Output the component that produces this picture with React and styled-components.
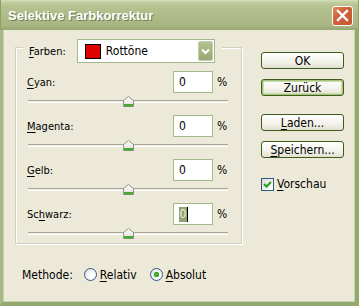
import React from "react";
import styled, { createGlobalStyle } from "styled-components";

const GlobalStyle = createGlobalStyle`
	html, body {
		margin: 0;
		padding: 0;
		background: #ece9d8;
	}
	body {
		font-family: "DejaVu Sans Condensed", "Liberation Sans", sans-serif;
		font-size: 11px;
		color: #000;
	}
	u {
		text-decoration-thickness: 1px;
		text-underline-offset: 2px;
	}
`;

const colorRows = [
	{ key: "c", pre: "", mn: "C", post: "yan:" },
	{ key: "m", pre: "", mn: "M", post: "agenta:" },
	{ key: "g", pre: "", mn: "G", post: "elb:" },
	{ key: "k", pre: "Sc", mn: "h", post: "warz:", selected: true },
];

const Dialog = () => {
	return (
		<Window>
			<GlobalStyle />
			<TitleBar>
				<Title>Selektive Farbkorrektur</Title>
				<CloseButton>
					<svg width="13" height="13" viewBox="0 0 13 13">
						<path d="M2 2 L11 11 M11 2 L2 11" stroke="#fff" strokeWidth="2.4" strokeLinecap="square" />
					</svg>
				</CloseButton>
			</TitleBar>

			<Body>
				<LeftColumn>
					<Group>
						<GroupHeader>
							<span>
								<u>F</u>arben:
							</span>
							<Select>
								<Swatch />
								<SelectText>Rottöne</SelectText>
								<SelectArrow>
									<svg width="9" height="7" viewBox="0 0 9 7">
										<path d="M1 1.5 L4.5 5 L8 1.5" fill="none" stroke="#fff" strokeWidth="2" />
									</svg>
								</SelectArrow>
							</Select>
						</GroupHeader>

						<Rows>
							{colorRows.map((r) => (
								<ColorRow key={r.key}>
									<ValueLine>
										<Label>
											{r.pre}
											<u>{r.mn}</u>
											{r.post}
										</Label>
										<NumberBox>
											{r.selected ? (
												<>
													<Selection>0</Selection>
													<Caret />
												</>
											) : (
												"0"
											)}
										</NumberBox>
										<Percent>%</Percent>
									</ValueLine>
									<Slider>
										<Track />
										<Thumb>
											<svg width="11" height="11" viewBox="0 0 11 11">
												<defs>
													<linearGradient id={`th-${r.key}`} x1="0" y1="0" x2="0" y2="1">
														<stop offset="0" stopColor="#ffffff" />
														<stop offset="1" stopColor="#dedfd6" />
													</linearGradient>
												</defs>
												<path
													d="M0.5 4.5 L5.5 0.5 L10.5 4.5 V10.5 H0.5 Z"
													fill={`url(#th-${r.key})`}
													stroke="#8d9482"
												/>
												<rect x="1" y="8" width="9" height="2.5" fill="#49a63a" />
											</svg>
										</Thumb>
									</Slider>
								</ColorRow>
							))}
						</Rows>
					</Group>

					<MethodRow>
						<span>Methode:</span>
						<RadioItem>
							<Radio />
							<span>
								<u>R</u>elativ
							</span>
						</RadioItem>
						<RadioItem>
							<Radio $checked />
							<span>
								<u>A</u>bsolut
							</span>
						</RadioItem>
					</MethodRow>
				</LeftColumn>

				<RightColumn>
					<Button>OK</Button>
					<Button $default>Zurück</Button>
					<Button $gap>
						<u>L</u>aden...
					</Button>
					<Button>
						<u>S</u>peichern...
					</Button>
					<CheckRow>
						<CheckBox>
							<svg width="9" height="9" viewBox="0 0 9 9">
								<path d="M1 4 L3.5 6.5 L8 2" fill="none" stroke="#21a121" strokeWidth="2" />
							</svg>
						</CheckBox>
						<span>
							<u>V</u>orschau
						</span>
					</CheckRow>
				</RightColumn>
			</Body>
		</Window>
	);
};

const Window = styled.div`
	width: 359px;
	height: 306px;
	display: flex;
	flex-direction: column;
	overflow: hidden;
`;

const TitleBar = styled.div`
	height: 30px;
	flex: none;
	box-sizing: border-box;
	display: flex;
	align-items: center;
	justify-content: space-between;
	padding: 1px 5px 0 7px;
	background: linear-gradient(
		to bottom,
		#d6dfbb 0px,
		#c4cfa2 2px,
		#b6c290 6px,
		#afbb89 50%,
		#a9b583 85%,
		#98a672 100%
	);
	border-left: 1px solid #8ea066;
	border-right: 1px solid #8ea066;
`;

const Title = styled.div`
	font: bold 13px "Liberation Sans", Arial, sans-serif;
	color: #fff;
	text-shadow: 1px 1px 0 #6e7d4c;
`;

const CloseButton = styled.div`
	width: 21px;
	height: 20px;
	box-sizing: border-box;
	border: 1px solid #fff;
	border-radius: 3px;
	background: linear-gradient(135deg, #e08a66 0%, #cf6039 40%, #c4552f 100%);
	display: flex;
	align-items: center;
	justify-content: center;
`;

const Body = styled.div`
	flex: 1;
	display: flex;
	padding: 9px 11px 0 12px;
	background: #ece9d8;
	border-left: 3px solid #a6b884;
	border-right: 4px solid #93a86d;
	border-bottom: 4px solid #93a86d;
	box-shadow: inset 1px 0 0 #c7d3b0, inset -1px -1px 0 #c7d3b0;
`;

const LeftColumn = styled.div`
	width: 227px;
	display: flex;
	flex-direction: column;
`;

const Group = styled.div`
	margin-top: 8px;
	border: 1px solid #d0d0bf;
	box-shadow: 1px 1px 0 #fff, inset 1px 1px 0 #fff;
	padding: 0 13px 0 11px;
	display: flex;
	flex-direction: column;
`;

const GroupHeader = styled.div`
	align-self: flex-start;
	margin: -9px 0 0 -4px;
	padding: 0 7px 0 6px;
	background: #ece9d8;
	display: flex;
	align-items: center;
	gap: 11px;
`;

const Select = styled.div`
	width: 138px;
	height: 24px;
	box-sizing: border-box;
	border: 1px solid #a5b88c;
	background: #fff;
	display: flex;
	align-items: center;
	padding: 0 1px 0 7px;
`;

const Swatch = styled.div`
	width: 16px;
	height: 15px;
	box-sizing: border-box;
	border: 1px solid #000;
	background: #e00000;
`;

const SelectText = styled.span`
	margin-left: 5px;
	font-size: 12px;
`;

const SelectArrow = styled.div`
	margin-left: auto;
	width: 15px;
	height: 20px;
	box-sizing: border-box;
	border: 1px solid #c3cdb0;
	border-radius: 2px;
	background: linear-gradient(#b4c294, #98a870);
	display: flex;
	align-items: center;
	justify-content: center;
`;

const Rows = styled.div`
	margin-top: 8px;
	display: flex;
	flex-direction: column;
	gap: 4px;
`;

const ColorRow = styled.div`
	display: flex;
	flex-direction: column;
`;

const ValueLine = styled.div`
	height: 22px;
	display: flex;
	align-items: center;
`;

const Label = styled.span`
	flex: 1;
`;

const NumberBox = styled.div`
	width: 40px;
	height: 22px;
	box-sizing: border-box;
	border: 1px solid #a5b88c;
	background: #fff;
	display: flex;
	align-items: center;
	padding-left: 5px;
	font-size: 12px;
`;

const Selection = styled.span`
	background: #93a36f;
	color: #eef1e2;
	padding: 0 0.5px;
	line-height: 15px;
`;

const Caret = styled.span`
	width: 1px;
	height: 15px;
	background: #000;
`;

const Percent = styled.span`
	margin-left: 4px;
	width: 11px;
	font-size: 12px;
`;

const Slider = styled.div`
	height: 18px;
	position: relative;
`;

const Track = styled.div`
	margin: 7px 0 0 1px;
	height: 1px;
	background: #f3f2ea;
	border-top: 1px solid #a4a396;
	border-bottom: 1px solid #fff;
	border-radius: 1px;
`;

const Thumb = styled.div`
	position: absolute;
	top: 3px;
	left: calc(50% - 5px);
	width: 11px;
	height: 11px;
	svg {
		display: block;
	}
`;

const MethodRow = styled.div`
	margin-top: 24px;
	padding-left: 7px;
	height: 13px;
	display: flex;
	align-items: center;
	font-size: 12px;
	> span:first-child {
		margin-right: 11px;
	}
`;

const RadioItem = styled.div`
	display: flex;
	align-items: center;
	gap: 3px;
	margin-right: 13px;
`;

const Radio = styled.div`
	width: 13px;
	height: 13px;
	box-sizing: border-box;
	border-radius: 50%;
	border: 1px solid #2c5a86;
	background: ${(p) =>
		p.$checked
			? "radial-gradient(circle, #6fc25a 0, #2f9a2a 2px, #4cae40 2.6px, rgba(0,0,0,0) 3px), radial-gradient(circle at 65% 65%, #fff 20%, #dcdbd2 100%)"
			: "radial-gradient(circle at 65% 65%, #fff 20%, #dcdbd2 100%)"};
`;

const RightColumn = styled.div`
	margin-left: 19px;
	width: 83px;
	padding-top: 13px;
	display: flex;
	flex-direction: column;
	gap: 10px;
`;

const Button = styled.div`
	height: 17px;
	box-sizing: border-box;
	border: 1px solid #3f5c1f;
	border-radius: 3px;
	background: linear-gradient(#ffffff, #f3f2ea 60%, #e2e0d0);
	display: flex;
	align-items: center;
	justify-content: center;
	font-size: 12px;
	margin-top: ${(p) => (p.$gap ? "8px" : "0")};
	box-shadow: ${(p) => (p.$default ? "inset 0 0 0 1px #a7c47a, inset 0 0 0 2px #c9dcaa" : "none")};
`;

const CheckRow = styled.div`
	margin-top: 9px;
	display: flex;
	align-items: center;
	gap: 3px;
	font-size: 12px;
`;

const CheckBox = styled.div`
	width: 13px;
	height: 13px;
	box-sizing: border-box;
	border: 1px solid #2c5a86;
	background: linear-gradient(135deg, #dcdbd2, #fff);
	display: flex;
	align-items: center;
	justify-content: center;
`;

export default Dialog;
